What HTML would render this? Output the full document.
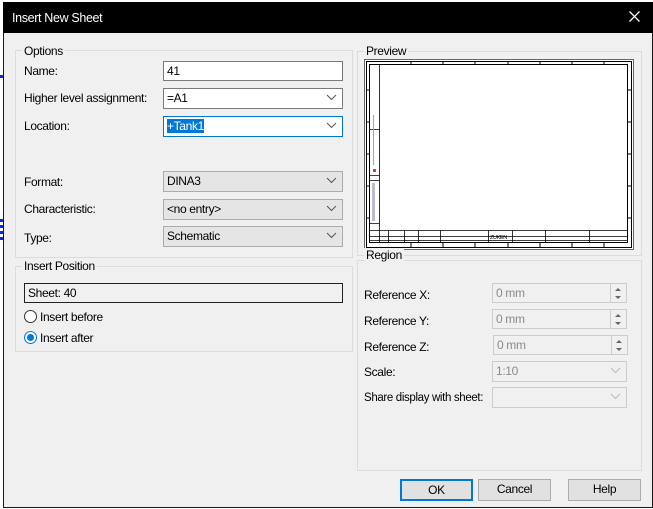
<!DOCTYPE html>
<html><head><style>
*{box-sizing:border-box;margin:0;padding:0}
body{width:653px;height:509px;background:#fff;position:relative;overflow:hidden;font-family:"Liberation Sans",sans-serif;font-size:12px;letter-spacing:-0.35px;color:#000}
.a{position:absolute}
.dlg{left:3px;top:2px;width:650px;height:506px;background:#f0f0f0;border:1px solid #1a1a1a}
.title{left:3px;top:2px;width:650px;height:31px;background:#000;color:#fff;font-size:12.5px;padding:9px 0 0 9px}
.grp{border:1px solid #dcdcdc}
.gl{background:#f0f0f0;padding:0 2px;line-height:14px}
.lbl{line-height:14px;white-space:nowrap}
.inp{background:#fff;border:1px solid #7a7a7a;padding:2px 3px;line-height:14px}
.dd{background:#e5e5e5;border:1px solid #acacac;padding:2px 3px;line-height:14px}
.chev{position:absolute;right:5px;top:5px;width:11px;height:7px}
.dis{background:#f0f0f0;border:1px solid #ccc;color:#8a8a8a;padding:2px 3px;line-height:14px}
.btn{background:#e1e1e1;border:1px solid #adadad;text-align:center;line-height:19px}
.mark{left:0;width:3px;height:3px;background:#0a28e6}
</style></head><body>
<div class="a mark" style="top:75px"></div>
<div class="a mark" style="top:219px"></div>
<div class="a mark" style="top:225px"></div>
<div class="a mark" style="top:231px"></div>
<div class="a mark" style="top:237px"></div>
<div class="a dlg"></div>
<div class="a title">Insert New Sheet</div>
<svg class="a" style="left:629px;top:11px" width="11" height="11"><path d="M0.5 0.5L10.5 10.5M10.5 0.5L0.5 10.5" stroke="#fff" stroke-width="1.3"/></svg>

<!-- Options -->
<div class="a grp" style="left:15px;top:50px;width:338px;height:208px"></div>
<div class="a gl" style="left:22px;top:44px">Options</div>
<div class="a lbl" style="left:24px;top:64px">Name:</div>
<div class="a inp" style="left:163px;top:61px;width:180px;height:20px">41</div>
<div class="a lbl" style="left:24px;top:91px">Higher level assignment:</div>
<div class="a inp" style="left:163px;top:88px;width:180px;height:21px">=A1<svg class="chev" viewBox="0 0 11 7"><path d="M1 1L5.5 5.5L10 1" fill="none" stroke="#555"/></svg></div>
<div class="a lbl" style="left:24px;top:119px">Location:</div>
<div class="a inp" style="left:163px;top:116px;width:180px;height:21px;border-color:#0078d7"><span style="background:#0078d7;color:#fff">+Tank1</span><svg class="chev" viewBox="0 0 11 7"><path d="M1 1L5.5 5.5L10 1" fill="none" stroke="#555"/></svg></div>
<div class="a lbl" style="left:24px;top:175px">Format:</div>
<div class="a dd" style="left:163px;top:171px;width:180px;height:21px">DINA3<svg class="chev" viewBox="0 0 11 7"><path d="M1 1L5.5 5.5L10 1" fill="none" stroke="#555"/></svg></div>
<div class="a lbl" style="left:24px;top:202px">Characteristic:</div>
<div class="a dd" style="left:163px;top:199px;width:180px;height:21px">&lt;no entry&gt;<svg class="chev" viewBox="0 0 11 7"><path d="M1 1L5.5 5.5L10 1" fill="none" stroke="#555"/></svg></div>
<div class="a lbl" style="left:24px;top:231px">Type:</div>
<div class="a dd" style="left:163px;top:226px;width:180px;height:21px">Schematic<svg class="chev" viewBox="0 0 11 7"><path d="M1 1L5.5 5.5L10 1" fill="none" stroke="#555"/></svg></div>

<!-- Insert position -->
<div class="a grp" style="left:15px;top:266px;width:338px;height:86px"></div>
<div class="a gl" style="left:22px;top:259px">Insert Position</div>
<div class="a" style="left:24px;top:283px;width:319px;height:20px;border:1px solid #222;padding:2px 3px;line-height:14px">Sheet: 40</div>
<svg class="a" style="left:24px;top:310px" width="13" height="13"><circle cx="6.5" cy="6.5" r="6" fill="#fff" stroke="#333"/></svg>
<div class="a lbl" style="left:40px;top:310px">Insert before</div>
<svg class="a" style="left:24px;top:331px" width="13" height="13"><circle cx="6.5" cy="6.5" r="6" fill="#fff" stroke="#0078d7"/><circle cx="6.5" cy="6.5" r="3.5" fill="#0078d7"/></svg>
<div class="a lbl" style="left:40px;top:331px">Insert after</div>

<!-- Preview -->
<div class="a grp" style="left:357px;top:51px;width:285px;height:205px"></div>
<div class="a gl" style="left:364px;top:44px">Preview</div>
<svg class="a" style="left:364px;top:59px" width="270" height="191" viewBox="0 0 270 191">
<rect x="0.5" y="0.5" width="269" height="190" fill="#fff" stroke="#666"/>
<rect x="2.5" y="2.5" width="265" height="186" fill="none" stroke="#000"/>
<rect x="5.5" y="5.5" width="258" height="178" fill="none" stroke="#000"/>
<path d="M15.5 5.5V183.5M5.5 70.5H15.5M5.5 116.5H15.5M5.5 121.5H15.5M5.5 164.5H15.5M5.5 171.5H263.5M5.5 177.5H263.5M5.5 181.5H263.5M76.5 171.5V183.5M124.5 171.5V183.5M148.5 171.5V183.5M181.5 171.5V183.5M225.5 171.5V183.5M24.5 171.5V183.5M40.5 171.5V183.5M54.5 171.5V183.5" stroke="#000" fill="none" stroke-width="0.8"/>
<path d="M47 2.5V5.5M79 2.5V5.5M111 2.5V5.5M144 2.5V5.5M176 2.5V5.5M208 2.5V5.5M240 2.5V5.5M47 183.5V188.5M79 183.5V188.5M111 183.5V188.5M144 183.5V188.5M176 183.5V188.5M208 183.5V188.5M240 183.5V188.5M2.5 31H5.5M2.5 63H5.5M2.5 95H5.5M2.5 127H5.5M2.5 159H5.5M263.5 31H267.5M263.5 63H267.5M263.5 95H267.5M263.5 127H267.5M263.5 159H267.5" stroke="#000"/>
<rect x="9" y="56" width="1" height="50" fill="#b9a"/>
<rect x="9" y="110" width="3" height="3" fill="#e33"/>
<rect x="8" y="124" width="3" height="38" fill="#bbc"/>
<text x="126" y="180" font-size="5.5" font-family="Liberation Sans">ZUKEN</text>
</svg>

<!-- Region -->
<div class="a grp" style="left:357px;top:260px;width:285px;height:211px"></div>
<div class="a gl" style="left:364px;top:248px">Region</div>
<div class="a lbl" style="left:364px;top:288px">Reference X:</div>
<div class="a dis" style="left:492px;top:283px;width:135px;height:20px">0 mm</div>
<div class="a lbl" style="left:364px;top:314px">Reference Y:</div>
<div class="a dis" style="left:492px;top:309px;width:135px;height:20px">0 mm</div>
<div class="a lbl" style="left:364px;top:340px">Reference Z:</div>
<div class="a dis" style="left:493px;top:335px;width:135px;height:20px">0 mm</div>
<svg class="a" style="left:610px;top:284px" width="16" height="70"><g fill="#666"><path d="M5 7L8 4L11 7Z M5 12L8 15L11 12Z"/><path transform="translate(0,26)" d="M5 7L8 4L11 7Z M5 12L8 15L11 12Z"/><path transform="translate(1,52)" d="M5 7L8 4L11 7Z M5 12L8 15L11 12Z"/></g><path d="M0.5 0V18M0.5 26V44M1.5 52V70" stroke="#ccc"/></svg>
<div class="a lbl" style="left:364px;top:365px">Scale:</div>
<div class="a dis" style="left:492px;top:361px;width:135px;height:21px">1:10<svg class="chev" viewBox="0 0 11 7"><path d="M1 1L5.5 5.5L10 1" fill="none" stroke="#bbb"/></svg></div>
<div class="a lbl" style="left:364px;top:391px;font-size:11.5px">Share display with sheet:</div>
<div class="a dis" style="left:492px;top:387px;width:135px;height:21px"><svg class="chev" viewBox="0 0 11 7"><path d="M1 1L5.5 5.5L10 1" fill="none" stroke="#bbb"/></svg></div>

<!-- Buttons -->
<div class="a btn" style="left:400px;top:479px;width:73px;height:22px;border:2px solid #0078d7;line-height:18px">OK</div>
<div class="a btn" style="left:478px;top:479px;width:73px;height:22px">Cancel</div>
<div class="a btn" style="left:568px;top:479px;width:73px;height:22px">Help</div>
</body></html>
